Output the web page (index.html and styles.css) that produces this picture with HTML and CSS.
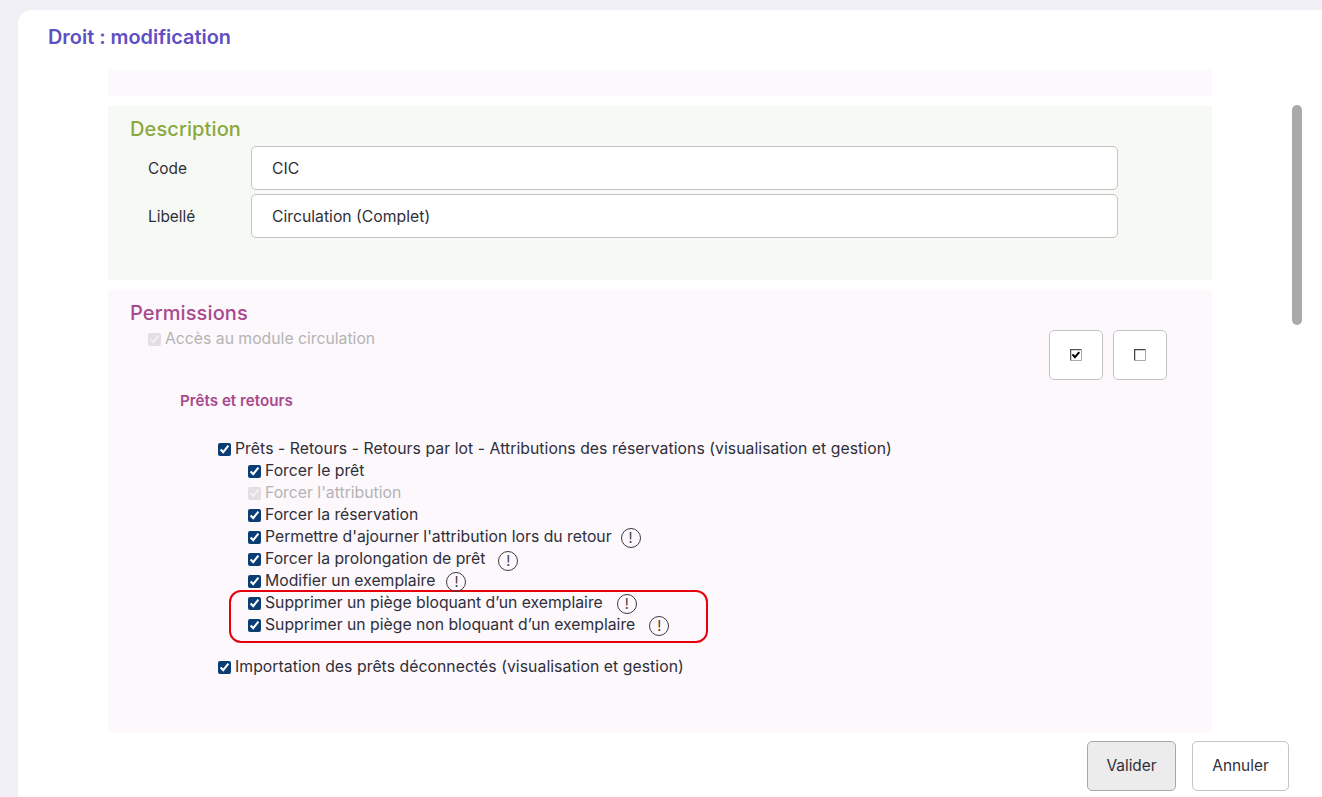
FILE: index.html
```html
<!DOCTYPE html>
<html lang="fr">
<head>
<meta charset="utf-8">
<title>Droit : modification</title>
<link rel="stylesheet" href="styles.css">
</head>
<body>
<main class="card">
  <h1 class="title">Droit : modification</h1>
  <div class="content">
    <div class="band"></div>
    <section class="desc">
      <h2 class="desc-title">Description</h2>
      <div class="field"><label class="field-label">Code</label><div class="input">CIC</div></div>
      <div class="field"><label class="field-label">Libellé</label><div class="input">Circulation (Complet)</div></div>
    </section>
    <section class="perms">
      <h2 class="perms-title">Permissions</h2>
      <div class="perm-head">
        <label class="row muted"><input type="checkbox" checked disabled>Accès au module circulation</label>
        <div class="tools">
          <button class="tool" type="button" aria-label="Tout cocher"><svg width="12" height="12" viewBox="0 0 12 12"><rect x="1" y="1" width="10" height="10" fill="#fff"/><path d="M.6 11.5V.6h10.9" fill="none" stroke="#555" stroke-width="1.3"/><path d="M.5 11.5h11V.5" fill="none" stroke="#aaa"/><path d="M2.5 5.3l2.4 2.8 4.4-5" fill="none" stroke="#000" stroke-width="2"/></svg></button>
          <button class="tool" type="button" aria-label="Tout décocher"><svg width="12" height="12" viewBox="0 0 12 12"><rect x="1" y="1" width="10" height="10" fill="#fff"/><path d="M.6 11.5V.6h10.9" fill="none" stroke="#444" stroke-width="1.3"/><path d="M.5 11.5h11V.5" fill="none" stroke="#aaa"/></svg></button>
        </div>
      </div>
      <h3 class="group-title">Prêts et retours</h3>
      <div class="tree">
        <label class="row wide"><input type="checkbox" checked>Prêts - Retours - Retours par lot - Attributions des réservations (visualisation et gestion)</label>
        <div class="sub">
          <label class="row"><input type="checkbox" checked>Forcer le prêt</label>
          <label class="row muted"><input type="checkbox" checked disabled>Forcer l'attribution</label>
          <label class="row"><input type="checkbox" checked>Forcer la réservation</label>
          <label class="row"><input type="checkbox" checked>Permettre d'ajourner l'attribution lors du retour<span class="info i1">!</span></label>
          <label class="row"><input type="checkbox" checked>Forcer la prolongation de prêt<span class="info i2 low">!</span></label>
          <label class="row"><input type="checkbox" checked>Modifier un exemplaire<span class="info i3">!</span></label>
          <div class="highlight">
            <label class="row"><input type="checkbox" checked>Supprimer un piège bloquant d’un exemplaire<span class="info i4">!</span></label>
            <label class="row"><input type="checkbox" checked>Supprimer un piège non bloquant d’un exemplaire<span class="info i4">!</span></label>
          </div>
        </div>
        <label class="row wide"><input type="checkbox" checked>Importation des prêts déconnectés (visualisation et gestion)</label>
      </div>
    </section>
    <div class="actions">
      <button class="btn btn-primary" type="button">Valider</button>
      <button class="btn" type="button">Annuler</button>
    </div>
  </div>
  <div class="scrollbar"></div>
</main>
</body>
</html>
```

FILE: styles.css
```css
* { box-sizing: border-box; }
html, body { height: 100%; }
body {
  margin: 0;
  height: 797px;
  overflow: hidden;
  padding: 10px 0 0 18px;
  background: #f0f0f6;
  font-family: Inter, "Noto Sans", sans-serif;
  font-size: 15.75px;
  color: #2f2f3a;
}
.card {
  position: relative;
  background: #fff;
  border-radius: 14px 0 0 0;
  height: 800px;
  padding: 15px 0 0 30px;
}
.title {
  margin: 0;
  height: 24px;
  font-size: 19.9px;
  line-height: 24px;
  font-weight: 600;
  color: #5f4fc4;
}
.content { margin: 21px 0 0 60px; width: 1104px; }
.band { height: 26px; background: #fcf8fc; }
.desc {
  margin-top: 10px;
  height: 174px;
  padding: 11px 0 0 22px;
  background: #f7faf4;
}
.desc-title, .perms-title {
  margin: 0;
  font-size: 20px;
  line-height: 24px;
  font-weight: 500;
  letter-spacing: .1px;
}
.desc-title { color: #8ba83f; }
.perms-title { color: #a8498f; }
.field { display: flex; align-items: center; height: 44px; margin-bottom: 4px; }
.field:first-of-type { margin-top: 5px; }
.field-label { width: 121px; padding-left: 18px; font-size: 15.4px; padding-top: 1px; }
.input {
  width: 867px;
  height: 44px;
  padding: 1px 0 0 20px;
  line-height: 42px;
  background: #fff;
  border: 1px solid #c4c4c4;
  border-radius: 5px;
}
.perms {
  margin-top: 10px;
  height: 443px;
  padding: 11px 0 0 22px;
  background: #fcf8fc;
}
.perm-head { display: flex; justify-content: space-between; height: 50px; margin-top: 5px; }
.perm-head .row { margin: -2px 0 0 18px; }
.tools { display: flex; gap: 10px; margin-right: 45px; }
.tool {
  display: flex;
  align-items: center;
  justify-content: center;
  width: 54px;
  height: 50px;
  padding: 0;
  background: #fff;
  border: 1px solid #c4c4c4;
  border-radius: 5px;
}
.group-title {
  margin: 11px 0 0 50px;
  font-size: 15.2px;
  line-height: 20px;
  font-weight: 600;
  color: #a8498f;
}
.tree { margin: 27px 0 0 88px; }
.sub { margin: 0 0 0 30px; }
.row { display: flex; align-items: center; height: 22px; line-height: 22px; white-space: nowrap; }
.wide { letter-spacing: .055px; }
.row input {
  flex: none;
  width: 13px;
  height: 13px;
  margin: 0 4px 0 0;
  accent-color: #0a3d73;
}
.row input:disabled { opacity: .6; }
.muted { color: #b4b4b4; }
.info {
  flex: none;
  display: inline-block;
  width: 20px;
  height: 20px;
  margin-top: 2px;
  border: 1.4px solid #3c3c3c;
  border-radius: 50%;
  font-size: 14px;
  line-height: 17px;
  text-align: center;
  color: #3c3c3c;
}
.low { margin-top: 4px; }
.i1 { margin-left: 9px; }
.i2 { margin-left: 13px; }
.i3 { margin-left: 11px; }
.i4 { margin-left: 14px; }
.highlight {
  width: 479px;
  height: 53px;
  margin: -2px 0 13px -19px;
  padding-left: 17px;
  border: 2px solid #e8000d;
  border-radius: 12px;
}
.actions { display: flex; gap: 16px; justify-content: flex-end; margin: 8px -77px 0 0; }
.btn {
  width: 97px;
  height: 50px;
  padding: 0 0 2px;
  background: #fff;
  border: 1px solid #c4c4c4;
  border-radius: 5px;
  font: inherit;
  font-size: 15.4px;
  color: #2f2f3a;
}
.btn-primary { width: 89px; background: #ececec; border-color: #a8a8a8; }
.scrollbar {
  position: absolute;
  top: 95px;
  left: 1274px;
  width: 10px;
  height: 220px;
  background: #aaa;
  border-radius: 5px;
}
```
